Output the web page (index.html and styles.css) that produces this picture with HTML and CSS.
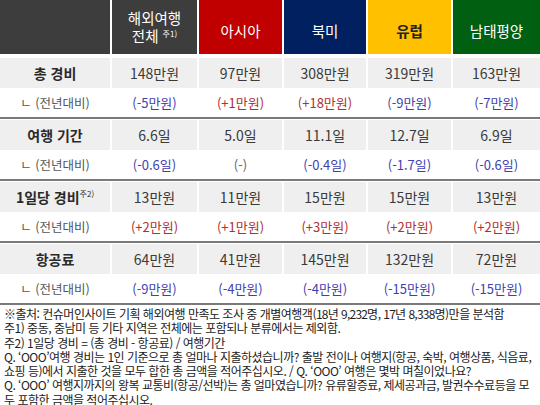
FILE: index.html
```html
<!DOCTYPE html>
<html lang="ko">
<head>
<meta charset="utf-8">
<link rel="stylesheet" href="styles.css">
</head>
<body>
<div class="page">
  <div class="row head">
    <div class="hc dark"></div>
    <div class="hc dark two"><span>해외여행<br>전체 <sup>주1)</sup></span></div>
    <div class="hc red">아시아</div>
    <div class="hc navy">북미</div>
    <div class="hc yellow">유럽</div>
    <div class="hc green">남태평양</div>
  </div>

  <div class="group first">
    <div class="row main">
      <div class="lbl">총 경비</div><div>148만원</div><div>97만원</div><div>308만원</div><div>319만원</div><div>163만원</div>
    </div>
    <div class="row sub">
      <div class="sl">ㄴ (전년대비)</div><div class="dn">(-5만원)</div><div class="up">(+1만원)</div><div class="up">(+18만원)</div><div class="dn">(-9만원)</div><div class="dn">(-7만원)</div>
    </div>
  </div>

  <div class="group">
    <div class="row main">
      <div class="lbl">여행 기간</div><div>6.6일</div><div>5.0일</div><div>11.1일</div><div>12.7일</div><div>6.9일</div>
    </div>
    <div class="row sub">
      <div class="sl">ㄴ (전년대비)</div><div class="dn">(-0.6일)</div><div class="nc">(-)</div><div class="dn">(-0.4일)</div><div class="dn">(-1.7일)</div><div class="dn">(-0.6일)</div>
    </div>
  </div>

  <div class="group">
    <div class="row main">
      <div class="lbl"><span>1일당 경비<sup>주2)</sup></span></div><div>13만원</div><div>11만원</div><div>15만원</div><div>15만원</div><div>13만원</div>
    </div>
    <div class="row sub">
      <div class="sl">ㄴ (전년대비)</div><div class="up">(+2만원)</div><div class="up">(+1만원)</div><div class="up">(+3만원)</div><div class="up">(+2만원)</div><div class="up">(+2만원)</div>
    </div>
  </div>

  <div class="group">
    <div class="row main">
      <div class="lbl">항공료</div><div>64만원</div><div>41만원</div><div>145만원</div><div>132만원</div><div>72만원</div>
    </div>
    <div class="row sub">
      <div class="sl">ㄴ (전년대비)</div><div class="dn">(-9만원)</div><div class="dn">(-4만원)</div><div class="dn">(-4만원)</div><div class="dn">(-15만원)</div><div class="dn">(-15만원)</div>
    </div>
  </div>

  <div class="notes">
    <p>※출처: 컨슈머인사이트 기획 해외여행 만족도 조사 중 개별여행객(<span class="n">18</span>년 <span class="n">9,232</span>명, <span class="n">17</span>년 <span class="n">8,338</span>명)만을 분석함</p>
    <p>주1) 중동, 중남미 등 기타 지역은 전체에는 포함되나 분류에서는 제외함.</p>
    <p>주2) 1일당 경비 = (총 경비 - 항공료) / 여행기간</p>
    <p>Q. ‘OOO’여행 경비는 1인 기준으로 총 얼마나 지출하셨습니까? 출발 전이나 여행지(항공, 숙박, 여행상품, 식음료,</p>
    <p>쇼핑 등)에서 지출한 것을 모두 합한 총 금액을 적어주십시오. / Q. ‘OOO’ 여행은 몇박 며칠이었나요?</p>
    <p>Q. ‘OOO’ 여행지까지의 왕복 교통비(항공/선박)는 총 얼마였습니까? 유류할증료, 제세공과금, 발권수수료등을 모</p>
    <p>두 포함한 금액을 적어주십시오.</p>
  </div>
</div>
</body>
</html>
```
FILE: styles.css
```css
* { box-sizing: border-box; }
html, body { margin: 0; padding: 0; background: #fff; }
body { font-family: "Noto Sans CJK KR", "Noto Sans", sans-serif; color: #333; }
.page { width: 540px; height: 405px; overflow: hidden; }

.row {
  display: grid;
  grid-template-columns: 110px 85px 83px 82px 83px 87px;
  column-gap: 2px;
}
.row > div {
  display: flex;
  align-items: center;
  justify-content: center;
  text-align: center;
}

.head { height: 54px; }
.hc {
  color: #fff;
  font-size: 14.5px;
  line-height: 18px;
  padding-top: 8px;
}
.hc.two { padding-top: 0; }
.hc sup { font-size: 8px; vertical-align: 5px; line-height: 0; }
.dark { background: #3d3d3d; }
.red { background: #c00000; }
.navy { background: #002060; }
.yellow { background: #ffc000; color: #222; font-weight: bold; }
.green { background: #005f10; }

.group { border-bottom: 2px solid #7a7a7a; padding-top: 1px; }
.group.first { padding-top: 4px; }

.main { height: 30px; }
.main > div {
  background: #efefef;
  font-size: 14px;
  color: #3a3a3a;
}
.main > .lbl { font-weight: bold; font-size: 14px; color: #2a2a2a; }
.lbl sup { font-size: 8px; font-weight: normal; vertical-align: 6px; line-height: 0; }

.sub { height: 29px; }
.sub > div { font-size: 13px; }
.sub > .sl { color: #555; font-size: 12.5px; }
.up { color: #b03030; }
.dn { color: #3f3fb0; }
.nc { color: #666; }

.notes {
  padding: 2px 0 0 4px;
  font-size: 12px;
  line-height: 14.3px;
  letter-spacing: -0.5px;
  color: #222;
}
.notes p { margin: 0; white-space: nowrap; }
.notes .n { letter-spacing: -0.8px; }
```
